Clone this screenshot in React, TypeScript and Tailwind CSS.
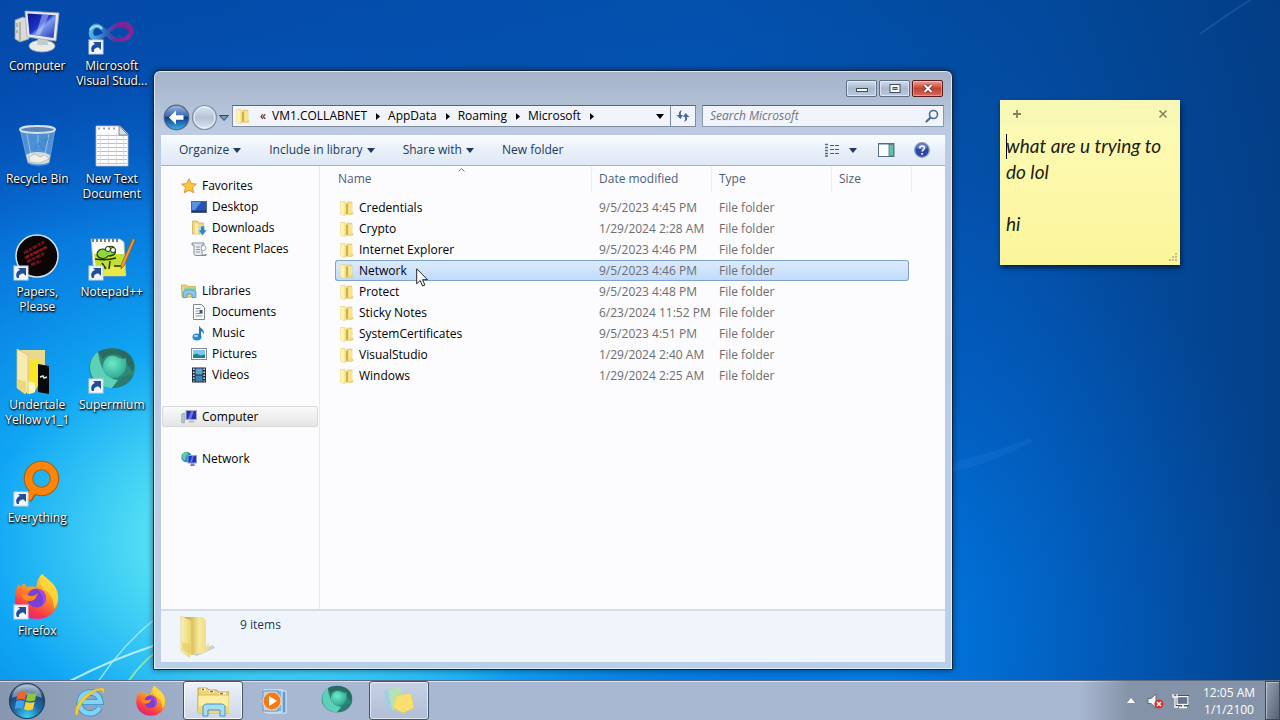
import React, { useState } from 'react';
import { clsx } from 'clsx';

interface IconProps {
  className?: string;
}

interface FileRow {
  name: string;
  modified: string;
}

const files: FileRow[] = [
  { name: 'Credentials', modified: '9/5/2023 4:45 PM' },
  { name: 'Crypto', modified: '1/29/2024 2:28 AM' },
  { name: 'Internet Explorer', modified: '9/5/2023 4:46 PM' },
  { name: 'Network', modified: '9/5/2023 4:46 PM' },
  { name: 'Protect', modified: '9/5/2023 4:48 PM' },
  { name: 'Sticky Notes', modified: '6/23/2024 11:52 PM' },
  { name: 'SystemCertificates', modified: '9/5/2023 4:51 PM' },
  { name: 'VisualStudio', modified: '1/29/2024 2:40 AM' },
  { name: 'Windows', modified: '1/29/2024 2:25 AM' },
];

/* ---------- shared drawings ---------- */

function ShortcutArrow() {
  return (
    <g>
      <rect x="1" y="32" width="14" height="14" fill="#f4f8fc" stroke="#c8d4e2" strokeWidth="1" />
      <path d="M4 44c-2-4 0-7 3-8L5 34h8v8l-2.500-2.500c-3 0-5 1.500-4.500 4.500z" fill="#1f4f9c" />
    </g>
  );
}

function FolderSmall({ className }: IconProps) {
  return (
    <svg viewBox="0 0 16 16" className={clsx('size-4 shrink-0', className)} aria-hidden="true">
      <path d="M8 2h5v9.500l1.300 2-1.300 1H8z" fill="#f0d976" stroke="#dcc25c" strokeWidth=".5" />
      <path d="M1.500 1.500H6l1 1.500v12l-2 .5-3.500-1.500z" fill="#f9e893" stroke="#e2c862" strokeWidth=".5" />
      <path d="M1.500 1.500L5 3v12l-3.500-1z" fill="#fdf3b4" />
      <path d="M7 4l2-.5v9.700L7 14.500z" fill="#c9a53a" opacity=".8" />
      <path d="M9.500 3l3.500.5v8l-3.500 2z" fill="#f8e68c" />
    </svg>
  );
}

function FolderLarge({ className }: IconProps) {
  return (
    <svg viewBox="0 0 40 46" className={className} aria-hidden="true">
      <defs>
        <linearGradient id="flFront" x1="0" x2="1">
          <stop offset="0" stopColor="#fbf2b4" />
          <stop offset="1" stopColor="#ecd672" />
        </linearGradient>
        <linearGradient id="flBack" x1="0" x2="1">
          <stop offset="0" stopColor="#c2a43c" />
          <stop offset=".35" stopColor="#dcc25c" />
          <stop offset=".65" stopColor="#f6e99e" />
          <stop offset="1" stopColor="#efdc84" />
        </linearGradient>
      </defs>
      <path d="M12 41l22-9 2 3-18 8z" fill="#9a9fb0" opacity=".45" />
      <path d="M5 4h19l3 4v27l1 4-16 3z" fill="url(#flBack)" />
      <path d="M27 33l3-3v5l-2 4z" fill="#f1e09a" />
      <path d="M2 3l10 5v33l-2 3-8-6z" fill="url(#flFront)" stroke="#e8d684" strokeWidth=".8" />
      <path d="M3 29l8 2v10l-8-4z" fill="#dfc04e" opacity=".45" />
    </svg>
  );
}

function CaretDown({ className }: IconProps) {
  return (
    <svg viewBox="0 0 8 5" className={clsx('h-[5px] w-2 shrink-0', className)} aria-hidden="true">
      <path d="M0 0h8L4 5z" fill="currentColor" />
    </svg>
  );
}

/* ---------- desktop icons ---------- */

function ComputerIcon() {
  return (
    <>
      <defs>
        <linearGradient id="pcScreen" x1="0" y1="0" x2="1" y2="1">
          <stop offset="0" stopColor="#0b1590" />
          <stop offset=".45" stopColor="#1b34c8" />
          <stop offset=".55" stopColor="#7f9cf0" />
          <stop offset="1" stopColor="#1b2fb8" />
        </linearGradient>
      </defs>
      <path d="M2 12l8-3 6 2v20l-9 3-5-3z" fill="#d9dcd6" stroke="#8d969c" strokeWidth=".8" />
      <path d="M7 14v19M4 15v4M4 22v3" stroke="#8f9a9d" strokeWidth="1.200" />
      <ellipse cx="29" cy="38" rx="13" ry="6" fill="#e9ebe6" stroke="#9aa5ae" strokeWidth=".8" />
      <path d="M25 28h9l1 9H24z" fill="#c4cbd0" />
      <path d="M12 3l34 2-3 28-29-4z" fill="#e6e9e8" stroke="#9fa9b4" strokeWidth=".8" />
      <path d="M14.500 5.500l28.500 1.700-2.500 22.800-24-3.500z" fill="url(#pcScreen)" />
      <path d="M29 6.500l7 .5-9 20-4-.5z" fill="#d2dcff" opacity=".45" />
    </>
  );
}

function VisualStudioIcon() {
  return (
    <>
      <defs>
        <linearGradient id="vsLoop" x1="0" x2="1">
          <stop offset="0" stopColor="#4fb4e6" />
          <stop offset=".4" stopColor="#2f5fb8" />
          <stop offset=".65" stopColor="#6a2c98" />
          <stop offset="1" stopColor="#8c2a98" />
        </linearGradient>
      </defs>
      <path
        d="M3 25c0-6 5-9 9-6 6 3 9 13 18 13 8 0 14-4 13-10s-8-7-14-5c-7 3-11 10-17 12-5 2-9 1-9-4z"
        fill="none"
        stroke="url(#vsLoop)"
        strokeWidth="4.500"
      />
      <path d="M24 21c5-6 16-8 21-1 2 4 0 8-3 10 2-9-9-13-18-9z" fill="#8a1f90" opacity=".8" />
      <path d="M2 22c3-5 9-5 12-1" stroke="#a4e0f6" strokeWidth="2" fill="none" />
      <ShortcutArrow />
    </>
  );
}

function RecycleBinIcon() {
  return (
    <>
      <path d="M7 8h35l-6 34c-5 3-16 3-21 0z" fill="#8cc0ea" opacity=".55" stroke="#b8dcf2" strokeWidth="1" />
      <path d="M13 34c5-4 18-4 24 0l-1 7c-5 3-16 3-21 0z" fill="#d8dcd4" />
      <path d="M16 36l6-3 5 3 5-2 4 4-9 4-10-1z" fill="#f0f0ea" stroke="#9b9d94" strokeWidth=".5" />
      <path d="M14 13l5 27M25 14v12M36 13l-5 25" stroke="#e0f2fc" strokeWidth="1" opacity=".5" />
      <path d="M21 29l5-7 5 7M28 20l6-2-3 6" stroke="#3b87ce" strokeWidth="2" fill="none" opacity=".8" />
      <ellipse cx="24.500" cy="8.500" rx="17.500" ry="3.500" fill="#5e86b4" stroke="#d4e2ea" strokeWidth="1.800" />
    </>
  );
}

function TextFileIcon() {
  return (
    <>
      <path d="M8 5h24l8 8v32H8z" fill="#fdfdfd" stroke="#b9bec6" strokeWidth=".8" />
      <path
        d="M9 14.500h30M9 18.500h30M9 22.500h30M9 26.500h30M9 30.500h30M9 34.500h30M9 38.500h30M9 42.500h30"
        stroke="#b4bac2"
        strokeWidth=".9"
      />
      <path d="M12.500 12v32M20.500 12v32M28.500 12v32M35.500 13v31" stroke="#d2d6da" strokeWidth=".7" />
      <path d="M10 7.500h2M15 7.500h2M20 7.500h2M25 7.500h2" stroke="#9aa2ab" strokeWidth="2" />
      <path d="M31 5v9h9z" fill="#dadfe4" stroke="#6d747b" strokeWidth=".8" />
    </>
  );
}

function PapersIcon() {
  return (
    <>
      <circle cx="24" cy="22" r="21" fill="#0b0506" stroke="#d7e4ea" strokeWidth="1.500" />
      <path d="M11 19L31 8M12 24l22-11M14 28l18-9M18 31l10-4" stroke="#6c141a" strokeWidth="3" strokeDasharray="5 1 3 1" />
      <path d="M13 23l20-10" stroke="#a82428" strokeWidth="1" strokeDasharray="3 1" />
      <ShortcutArrow />
    </>
  );
}

function NotepadIcon() {
  return (
    <>
      <path d="M3 5h29l4 3 2 34H6z" fill="#fbfbf6" stroke="#a6aca8" strokeWidth=".8" />
      <path d="M6 20h30l1 22-28-1z" fill="#bfe030" />
      <path d="M15 38c5-8 16-5 21-10l1 14H16z" fill="#e9ea46" />
      <path d="M5 5v3M9 5v3M13 5v3M17 5v3M21 5v3M25 5v3M29 5v3" stroke="#505a5e" strokeWidth="1.500" />
      <path d="M9 21c0-6 6-7 9-5 2-5 8-5 9 0 2 5-4 6-7 6-3 4-9 3-11-1z" fill="#8cd83c" stroke="#20300c" strokeWidth="1.200" />
      <circle cx="20" cy="15" r="2.500" fill="#fff" stroke="#20300c" />
      <circle cx="25" cy="16" r="2.500" fill="#fff" stroke="#20300c" />
      <path d="M7 25c7 1 14 1 21-1M14 29l4 6M22 27l-1 8M26 32h9" stroke="#20300c" strokeWidth="1.500" fill="none" />
      <path d="M45 4l2 2-11 26-3 3v-4z" fill="#f09a28" stroke="#8c5418" strokeWidth=".7" />
      <ShortcutArrow />
    </>
  );
}

function UndertaleIcon() {
  return (
    <>
      <path d="M5 3h27v35l-18 3z" fill="#ead98c" />
      <path d="M17 13h9v24l-5 9-7 1z" fill="#f8e428" />
      <path d="M14 34l8 2v9l-6 2z" fill="#fff" opacity=".7" />
      <path d="M25 17l11 2v28l-11-2z" fill="#08090a" />
      <path d="M27 30l3-1 1 2 3-1" stroke="#e8e8e8" strokeWidth="1.500" fill="none" />
      <path d="M4 2l11 6v36l-3 3-8-6z" fill="#f8ebb0" stroke="#d8c06c" strokeWidth=".8" />
      <path d="M5 32l8 3v11l-8-5z" fill="#e4c860" opacity=".6" />
    </>
  );
}

function EverythingIcon() {
  return (
    <>
      <path d="M20 32l-5 8" stroke="#9a5a10" strokeWidth="8" />
      <circle cx="28.500" cy="18.500" r="13" fill="none" stroke="#a85c08" strokeWidth="9.500" />
      <circle cx="28.500" cy="18.500" r="13" fill="none" stroke="#ff8408" strokeWidth="7.500" />
      <path d="M20 31l-5 8" stroke="#ff8408" strokeWidth="6" />
      <ShortcutArrow />
    </>
  );
}

function SupermiumGlyph({ id }: { id: string }) {
  return (
    <>
      <defs>
        <radialGradient id={id} cx=".4" cy=".35" r=".7">
          <stop offset="0" stopColor="#6fe8c6" />
          <stop offset="1" stopColor="#2ba892" />
        </radialGradient>
      </defs>
      <ellipse cx="24" cy="21" rx="23" ry="20" fill="#2a8a7a" />
      <path d="M10 5C20-1 40 0 45 13c2 5 1 8 0 12L33 9c-7-3-14-2-18 3z" fill="#2a6a60" />
      <path d="M10 5C2 10 0 21 4 29c3 7 11 12 20 12l6-8C18 32 12 20 10 5z" fill="#5fd0b8" />
      <path d="M24 41c11 0 20-6 22-15L34 30z" fill="#2b7c6e" />
      <path d="M15 18c2-8 8-11 14-8 3 2 7 2 9 1 2 12-4 20-12 20-7 0-12-6-11-13z" fill={`url(#${id})`} />
    </>
  );
}

function FirefoxGlyph({ id }: { id: string }) {
  return (
    <>
      <defs>
        <linearGradient id={id} x1=".8" y1="0" x2=".3" y2="1">
          <stop offset="0" stopColor="#ffe84a" />
          <stop offset=".45" stopColor="#ff9422" />
          <stop offset=".8" stopColor="#f8374a" />
          <stop offset="1" stopColor="#e0218a" />
        </linearGradient>
      </defs>
      <path
        d="M29 1c3 4 12 8 15 17 5 15-5 28-20 28C10 46 1 36 2 24c0-5 1-9 4-13l1 3 4-4 3 4c4-1 7-1 9 1 1-6 2-10 6-14z"
        fill={`url(#${id})`}
      />
      <path d="M29 1c3 4 12 8 15 17 2 7 1 13-3 18 0-9-3-15-9-19-5-4-6-9-3-16z" fill="#ffd93b" opacity=".85" />
      <circle cx="23.500" cy="25" r="9.500" fill="#7a3fd6" />
      <path d="M14 22c5 2 8 1 11-2-2 5-3 8-9 8-4 0-7-3-8-7z" fill="#ff8a1c" />
      <path d="M23 16c6 0 10 4 10 9 0 3-1 5-3 7 1-7-1-12-7-16z" fill="#a04ae8" />
    </>
  );
}

interface DesktopItem {
  label: string[];
  icon: React.ReactNode;
}

const desktopItems: DesktopItem[] = [
  { label: ['Computer'], icon: <ComputerIcon /> },
  { label: ['Microsoft', 'Visual Stud...'], icon: <VisualStudioIcon /> },
  { label: ['Recycle Bin'], icon: <RecycleBinIcon /> },
  { label: ['New Text', 'Document'], icon: <TextFileIcon /> },
  { label: ['Papers,', 'Please'], icon: <PapersIcon /> },
  { label: ['Notepad++'], icon: <NotepadIcon /> },
  { label: ['Undertale', 'Yellow v1_1'], icon: <UndertaleIcon /> },
  { label: ['Supermium'], icon: <><SupermiumGlyph id="smDesk" /><ShortcutArrow /></> },
  { label: ['Everything'], icon: <EverythingIcon /> },
  { label: ['Firefox'], icon: <><FirefoxGlyph id="ffDesk" /><ShortcutArrow /></> },
];

function DesktopIcon({ item, className }: { item: DesktopItem; className?: string }) {
  return (
    <button type="button" className={clsx('flex flex-col items-center self-start pt-2', className)}>
      <svg viewBox="0 0 48 48" className="size-12" aria-hidden="true">
        {item.icon}
      </svg>
      <span className="mt-[2px] flex flex-col whitespace-nowrap text-[12px] leading-[15px] text-white [text-shadow:1px_1px_2px_#000,0_1px_2px_#000]">
        {item.label.map((line) => (
          <span key={line}>{line}</span>
        ))}
      </span>
    </button>
  );
}

function Wallpaper() {
  return (
    <svg
      viewBox="0 0 1280 680"
      preserveAspectRatio="none"
      className="absolute inset-0 h-full w-full"
      aria-hidden="true"
    >
      <defs>
        <linearGradient id="wpBase" x1="0" y1="0" x2="1" y2="0">
          <stop offset="0" stopColor="#0450b8" />
          <stop offset=".55" stopColor="#0459bd" />
          <stop offset=".8" stopColor="#0350a8" />
          <stop offset="1" stopColor="#034088" />
        </linearGradient>
        <radialGradient id="wpGlow" gradientUnits="userSpaceOnUse" cx="0" cy="0" r="1" gradientTransform="translate(280 540) scale(700 500)">
          <stop offset="0" stopColor="#6aecf6" />
          <stop offset=".2" stopColor="#4fdcf4" />
          <stop offset=".42" stopColor="#10a6f4" />
          <stop offset=".68" stopColor="#0880e4" stopOpacity=".85" />
          <stop offset="1" stopColor="#0560cc" stopOpacity="0" />
        </radialGradient>
        <radialGradient id="wpRight" gradientUnits="userSpaceOnUse" cx="0" cy="0" r="1" gradientTransform="translate(880 640) scale(420 480)">
          <stop offset="0" stopColor="#0086f0" stopOpacity=".85" />
          <stop offset="1" stopColor="#0060d0" stopOpacity="0" />
        </radialGradient>
        <linearGradient id="wpTop" x1="0" y1="0" x2="0" y2="1">
          <stop offset="0" stopColor="#02367c" stopOpacity=".25" />
          <stop offset="1" stopColor="#02367c" stopOpacity="0" />
        </linearGradient>
      </defs>
      <rect width="1280" height="680" fill="url(#wpBase)" />
      <rect width="1280" height="680" fill="url(#wpGlow)" />
      <rect width="1280" height="680" fill="url(#wpRight)" />
      <rect width="1280" height="240" fill="url(#wpTop)" />
      <path d="M68 682Q110 660 156 645" stroke="#c9f6ff" strokeWidth="2" fill="none" opacity=".85" />
      <path d="M98 682Q122 645 156 618" stroke="#b4f2fb" strokeWidth="1.500" fill="none" opacity=".8" />
      <path d="M128 682Q140 664 156 652" stroke="#a8f08c" strokeWidth="2" fill="none" opacity=".8" />
      <path d="M952 462Q990 454 1030 438L1032 442Q990 464 952 472z" fill="#3fa0f0" opacity=".12" />
      <path d="M1200 34Q1225 16 1250 0" stroke="#3f7fc0" strokeWidth="2" fill="none" opacity=".3" />
    </svg>
  );
}

/* ---------- explorer window ---------- */

function CaptionButtons() {
  const base =
    'flex h-[17px] w-[31px] items-center justify-center rounded-[2px] border border-[#5f6f88] bg-linear-to-b from-[#d3deec] via-[#a9b9cf] to-[#b9c9df] shadow-[inset_0_0_0_1px_rgba(255,255,255,0.55)]';
  return (
    <div className="flex gap-[2px]">
      <button type="button" aria-label="Minimize" className={base}>
        <svg viewBox="0 0 12 9" className="h-[9px] w-3" aria-hidden="true">
          <rect x=".5" y="4.500" width="11" height="3" fill="#fff" stroke="#414b5c" />
        </svg>
      </button>
      <button type="button" aria-label="Maximize" className={base}>
        <svg viewBox="0 0 12 9" className="h-[9px] w-3" aria-hidden="true">
          <rect x="1" y=".5" width="10" height="8" fill="#fff" stroke="#414b5c" />
          <rect x="4" y="3.500" width="4" height="2" fill="#a9b9cf" stroke="#414b5c" />
        </svg>
      </button>
      <button
        type="button"
        aria-label="Close"
        className="flex h-[17px] w-[31px] items-center justify-center rounded-[2px] border border-[#5a1a20] bg-linear-to-b from-[#e7a397] via-[#c4402f] to-[#d8695a] shadow-[inset_0_0_0_1px_rgba(255,255,255,0.35)]"
      >
        <svg viewBox="0 0 12 9" className="h-[9px] w-3" aria-hidden="true">
          <path d="M2.500 1l7 7M9.500 1l-7 7" stroke="#5b2020" strokeWidth="3.600" />
          <path d="M2.500 1l7 7M9.500 1l-7 7" stroke="#fff" strokeWidth="2.200" />
        </svg>
      </button>
    </div>
  );
}

function NavButtons() {
  return (
    <div className="flex items-center">
      <button type="button" aria-label="Back" className="size-[27px]">
        <svg viewBox="0 0 27 27" aria-hidden="true">
          <defs>
            <linearGradient id="navBack" x1="0" y1="0" x2="0" y2="1">
              <stop offset="0" stopColor="#9fb9e2" />
              <stop offset=".45" stopColor="#3a66b4" />
              <stop offset=".5" stopColor="#0f3a8c" />
              <stop offset="1" stopColor="#38b4ee" />
            </linearGradient>
          </defs>
          <circle cx="13.500" cy="13.500" r="12.300" fill="url(#navBack)" stroke="#53647f" strokeWidth="1.200" />
          <path d="M13 6.500l-7 7 7 7v-4.800h7.500v-4.400H13z" fill="#fff" />
        </svg>
      </button>
      <button type="button" aria-label="Forward" className="ml-px size-[27px]">
        <svg viewBox="0 0 27 27" aria-hidden="true">
          <defs>
            <linearGradient id="navFwd" x1="0" y1="0" x2="0" y2="1">
              <stop offset="0" stopColor="#dfe8f2" />
              <stop offset=".5" stopColor="#b4c3d6" />
              <stop offset="1" stopColor="#dbe6f2" />
            </linearGradient>
          </defs>
          <circle cx="13.500" cy="13.500" r="12" fill="url(#navFwd)" stroke="#7f8fa6" strokeWidth="1.200" />
          <circle cx="13.500" cy="13.500" r="10.500" fill="none" stroke="#eef4fa" strokeWidth="1" />
        </svg>
      </button>
      <button type="button" aria-label="Recent pages" className="ml-px">
        <svg viewBox="0 0 10 6" className="h-[6px] w-[10px]" aria-hidden="true">
          <path d="M.5.500h9L5 5.500z" fill="#6f9ab8" stroke="#2c4768" strokeWidth="1" />
        </svg>
      </button>
    </div>
  );
}

function AddressBar() {
  const crumbs = ['VM1.COLLABNET', 'AppData', 'Roaming', 'Microsoft'];
  return (
    <nav
      aria-label="Address"
      className="flex h-[22px] min-w-0 flex-1 items-center border border-[#7d8ca3] border-t-[#55647c] bg-[#f1f5fb] text-[12px] leading-4 text-black"
    >
      <FolderSmall className="ml-[2px]" />
      <span className="ml-[6px] w-3 text-center">«</span>
      {crumbs.map((crumb, i) => (
        <React.Fragment key={crumb}>
          <button type="button" className={clsx('whitespace-nowrap', i === 0 && 'ml-[3px]')}>
            {crumb}
          </button>
          <svg viewBox="0 0 21 7" className="h-[7px] w-[21px] shrink-0" aria-hidden="true">
            <path d="M9 0l4 3.500-4 3.500z" fill="#000" />
          </svg>
        </React.Fragment>
      ))}
      <button type="button" aria-label="Previous locations" className="ml-auto flex h-full w-5 items-center justify-center">
        <CaretDown />
      </button>
      <button
        type="button"
        aria-label="Refresh"
        className="flex h-full w-[25px] items-center justify-center border-l border-[#7d8ca3]"
      >
        <svg viewBox="0 0 16 14" className="h-[14px] w-4" aria-hidden="true">
          <path d="M7 1C4 2 3.500 4 4 6H1.500l4 4L8 6H6c-.3-2 0-3.500 1-5z" fill="#4a6a94" />
          <path d="M9 13c3-1 3.500-3 3-5h2.500l-4-4L8 8h2c.3 2 0 3.500-1 5z" fill="#4a6a94" />
        </svg>
      </button>
    </nav>
  );
}

function Toolbar() {
  const menus = ['Organize', 'Include in library', 'Share with'];
  return (
    <div className="flex h-[31px] items-center border-b border-[#a3b2c7] bg-linear-to-b from-[#fbfdff] via-[#e9f0f9] via-50% to-[#dfe8f4] pr-[15px] pl-[18px] text-[12px] leading-4 text-[#1e395b]">
      {menus.map((menu) => (
        <button key={menu} type="button" className="mr-[28px] flex items-center gap-1 whitespace-nowrap">
          {menu}
          <CaretDown />
        </button>
      ))}
      <button type="button" className="whitespace-nowrap">
        New folder
      </button>
      <div className="ml-auto flex items-center">
        <button type="button" aria-label="Change your view">
          <svg viewBox="0 0 16 14" className="h-[14px] w-4" aria-hidden="true">
            <path d="M1 1.500h3M1 4.500h3M1 7.500h3M1 10.500h3M1 13h3" stroke="#5b6c80" strokeWidth="1.500" />
            <path d="M6 2.500h4M11 2.500h4M6 6.500h4M11 6.500h4M6 10.500h4M11 10.500h4" stroke="#4b5c70" strokeWidth="1.200" />
          </svg>
        </button>
        <button type="button" aria-label="More views" className="ml-[9px]">
          <CaretDown />
        </button>
        <button type="button" aria-label="Show the preview pane" className="ml-[21px]">
          <svg viewBox="0 0 17 14" className="h-[14px] w-[17px]" aria-hidden="true">
            <rect x=".5" y=".5" width="15.500" height="13" fill="#fff" stroke="#5a6c80" />
            <path d="M1 1.500h15" stroke="#a9b9c9" />
            <rect x="11" y="1.500" width="4.500" height="11.500" fill="#5cc4ac" stroke="#5a6c80" strokeWidth=".8" />
          </svg>
        </button>
        <button type="button" aria-label="Get help" className="ml-[19px]">
          <svg viewBox="0 0 16 16" className="size-4" aria-hidden="true">
            <circle cx="8" cy="8" r="7.300" fill="#2b48a8" stroke="#8b98b8" strokeWidth="1.300" />
            <path d="M2.500 6a5.600 5.600 0 0 1 11 0c-3 1.500-8 1.500-11 0z" fill="#8fa6e4" opacity=".6" />
            <path d="M5.800 6.300c0-3.200 4.600-3 4.600-.3 0 1.800-2.300 1.800-2.300 3.600M8.100 11v1.800" stroke="#fff" strokeWidth="1.600" fill="none" />
          </svg>
        </button>
      </div>
    </div>
  );
}

const navIcons: Record<string, React.ReactNode> = {
  Favorites: (
    <path
      d="M8 .8l2.200 4.800 5.200.5-3.900 3.500 1.200 5.200L8 12.200l-4.700 2.600 1.200-5.200L.6 6.100l5.200-.5z"
      fill="#fbc53c"
      stroke="#dd8f22"
      strokeWidth=".9"
    />
  ),
  Desktop: (
    <>
      <rect x=".5" y="2.500" width="15" height="11" fill="#2353b4" stroke="#55677e" />
      <path d="M1 3h9l-6 8H1z" fill="#5a92e0" />
      <path d="M1 12.500h14" stroke="#27344c" strokeWidth="1.500" />
    </>
  ),
  Downloads: (
    <>
      <path d="M1.500 1h5l1 2h5v11h-11z" fill="#f2d976" stroke="#caa84a" strokeWidth=".7" />
      <path d="M4 4l3-1v11l-3 1z" fill="#fbeeb0" />
      <path d="M9.500 6h4v4H16l-4.500 5.500L7 10h2.500z" fill="#2f86d0" stroke="#d6ecfa" strokeWidth=".6" />
    </>
  ),
  'Recent Places': (
    <>
      <path d="M1 2h12v2h-2v9c0 1.500 4 1.500 4 0v1.500H5c-1.500 0-2-1-2-2V4H1z" fill="#e7edf2" stroke="#75838f" strokeWidth=".9" />
      <path d="M5 6h4M5 8.500h4M5 11h4" stroke="#7f8d9c" strokeWidth=".9" />
      <circle cx="12.500" cy="7" r="2.500" fill="#fff" stroke="#8492a0" strokeWidth=".8" />
    </>
  ),
  Libraries: (
    <>
      <path d="M.5 2h5l1 1.500h8V14H1z" fill="#f0d878" stroke="#c6a64a" strokeWidth=".8" />
      <path d="M3 4.500h11v4H3z" fill="#8fd49c" />
      <path d="M2 9c3-3 10-3 13 0v5.500h-4V11H6v3.500H2z" fill="#8cc8ea" stroke="#4d94bc" strokeWidth=".8" />
    </>
  ),
  Documents: (
    <>
      <path d="M2.500.5h8l3 3v12h-11z" fill="#fff" stroke="#7d8894" />
      <path d="M4.500 4.500h5M4.500 7h3M4.500 9.500h7M4.500 12h7" stroke="#8792a0" />
      <rect x="8.500" y="6" width="3" height="3" fill="#3a556f" />
    </>
  ),
  Music: (
    <>
      <ellipse cx="6" cy="12" rx="4.500" ry="3.400" fill="#2487d2" />
      <path d="M8 12V.5c1 3 6 4 5 9-.5-2-2-3-3-3.300V12z" fill="#1f78c4" />
      <ellipse cx="5" cy="11" rx="2" ry="1.200" fill="#a6dcfa" />
    </>
  ),
  Pictures: (
    <>
      <rect x=".5" y="2.500" width="15" height="11" fill="#fff" stroke="#7f8d9c" />
      <rect x="2" y="4" width="12" height="8" fill="#7cc8ee" />
      <path d="M2 12V9l4-1.500 3 2 5-1V12z" fill="#1c7f8c" />
    </>
  ),
  Videos: (
    <>
      <rect x="1" y=".5" width="14" height="15" fill="#1e2b38" />
      <rect x="4.500" y="1.500" width="7" height="6" fill="#5aa4d4" />
      <rect x="4.500" y="8.500" width="7" height="6" fill="#3d84b4" />
      <path d="M2.800 1.500v13M13.200 1.500v13" stroke="#e4eaf0" strokeWidth="1.500" strokeDasharray="1.500 1.500" />
    </>
  ),
  Computer: (
    <>
      <path d="M.8 5l2.500-.8V14l-2.500-.5z" fill="#c5cbd0" stroke="#858f9a" strokeWidth=".7" />
      <rect x="5" y="1.500" width="10.500" height="9" fill="#232fb4" stroke="#a5afc0" />
      <path d="M10 2h3l-3 8H7z" fill="#8094f0" opacity=".7" />
      <path d="M7 13.500h7l-1.500-2h-4z" fill="#b6bec8" />
    </>
  ),
  Network: (
    <>
      <circle cx="5.500" cy="6" r="5.200" fill="#2a90c8" />
      <path d="M2 2.500c2-2 4-1.500 5 0L5 5l-1 4.500C1 8 1 5 2 2.500z" fill="#6cd08c" />
      <rect x="7" y="4.500" width="8.500" height="7.500" fill="#1d34c0" stroke="#93a2c8" />
      <path d="M11 5h2l-2 6H9z" fill="#7c90f0" opacity=".7" />
      <path d="M9 15h5l-1-2.500h-3z" fill="#6a80d0" />
    </>
  ),
};

const navGroups = [
  { title: 'Favorites', children: ['Desktop', 'Downloads', 'Recent Places'] },
  { title: 'Libraries', children: ['Documents', 'Music', 'Pictures', 'Videos'] },
  { title: 'Computer', children: [] },
  { title: 'Network', children: [] },
];

function NavItem({ name, nested, active }: { name: string; nested?: boolean; active?: boolean }) {
  return (
    <a
      href="#"
      className={clsx(
        'mr-px flex h-[21px] items-center gap-[5px] rounded-[2px] border text-[12px] leading-4 text-black',
        nested ? 'pl-[28px]' : 'pl-[18px]',
        active ? 'border-[#d9d9d9] bg-linear-to-b from-[#fafafa] to-[#e5e5e5]' : 'border-transparent',
      )}
    >
      <svg viewBox="0 0 16 16" className="size-4 shrink-0" aria-hidden="true">
        {navIcons[name]}
      </svg>
      {name}
    </a>
  );
}

function FileTable() {
  const [selected, setSelected] = useState('Network');
  const head = 'flex h-[26px] items-center border-r border-[#eceff4] pl-[7px]';
  return (
    <table className="ml-[15px] w-[574px] table-fixed border-separate border-spacing-0 text-left text-[12px] leading-4">
      <colgroup>
        <col className="w-[257px]" />
        <col className="w-[120px]" />
        <col className="w-[120px]" />
        <col />
      </colgroup>
      <thead className="text-[#4c607a]">
        <tr>
          <th className="relative p-0 pb-[5px] font-normal">
            <div className="flex h-[26px] items-center border-r border-[#eceff4] pl-[3px]">Name</div>
            <svg viewBox="0 0 7 4" className="absolute top-[2px] left-[123px] h-1 w-[7px]" aria-hidden="true">
              <path d="M.5 3.500l3-3 3 3" stroke="#6b7f96" fill="none" />
            </svg>
          </th>
          <th className="p-0 pb-[5px] font-normal">
            <div className={head}>Date modified</div>
          </th>
          <th className="p-0 pb-[5px] font-normal">
            <div className={head}>Type</div>
          </th>
          <th className="p-0 pb-[5px] font-normal">
            <div className={clsx(head, 'w-20')}>Size</div>
          </th>
        </tr>
      </thead>
      <tbody className="text-[#6d6d6d]">
        {files.map((file) => {
          const cell = clsx(
            'h-[21px] border-y p-0 pl-[7px] whitespace-nowrap',
            selected === file.name
              ? 'border-[#7da2ce] bg-linear-to-b from-[#dcebfc] to-[#c1dbfc]'
              : 'border-transparent',
          );
          return (
            <tr key={file.name} onClick={() => setSelected(file.name)}>
              <td className={clsx(cell, 'rounded-l-[3px] border-l pl-[3px]!')}>
                <div className="flex items-center gap-1 text-black">
                  <FolderSmall />
                  {file.name}
                </div>
              </td>
              <td className={cell}>{file.modified}</td>
              <td className={cell}>File folder</td>
              <td className={clsx(cell, 'rounded-r-[3px] border-r')} />
            </tr>
          );
        })}
      </tbody>
    </table>
  );
}

function ExplorerWindow() {
  return (
    <section
      aria-label="Microsoft"
      className="absolute top-[70px] left-[153px] flex h-[600px] w-[800px] flex-col rounded-t-[7px] border border-[#16243a] bg-linear-to-b from-[#a5b2c8] via-[#bccbe2] via-10% to-[#b9cfe8] px-[7px] pb-[7px] shadow-[inset_0_0_0_1px_rgba(235,245,255,0.8),0_0_6px_rgba(0,0,0,0.5)]"
    >
      <header className="flex h-[33px] items-start justify-end pt-[9px] pr-[2px]">
        <CaptionButtons />
      </header>
      <div className="flex h-[31px] items-start gap-[6px] pr-px pl-[2px]">
        <div className="flex flex-1 items-start gap-[3px]">
          <NavButtons />
          <div className="flex flex-1 pt-px">
            <AddressBar />
          </div>
        </div>
        <label className="mt-px flex h-[22px] w-[242px] items-center border border-[#8a99b0] border-t-[#55647c] bg-[#f1f5fb] pr-1 pl-[7px]">
          <input
            type="text"
            aria-label="Search Microsoft"
            placeholder="Search Microsoft"
            className="min-w-0 flex-1 bg-transparent text-[12px] leading-4 italic outline-none placeholder:text-[#6d7480] placeholder:opacity-100"
          />
          <svg viewBox="0 0 14 14" className="size-[14px]" aria-hidden="true">
            <circle cx="8.500" cy="5.500" r="4" fill="#eef5fc" stroke="#4a6a94" strokeWidth="1.600" />
            <path d="M5.500 8.500L1.500 12.500" stroke="#4a6a94" strokeWidth="2.200" strokeLinecap="round" />
          </svg>
        </label>
      </div>
      <div className="flex min-h-0 flex-1 flex-col bg-[#fcfcfe]">
        <Toolbar />
        <div className="flex min-h-0 flex-1">
          <aside className="flex w-[159px] flex-col gap-[21px] border-r border-[#e6ebf3] pt-[9px] pl-px">
            {navGroups.map((group) => (
              <div key={group.title}>
                <NavItem name={group.title} active={group.title === 'Computer'} />
                {group.children.map((child) => (
                  <NavItem key={child} name={child} nested />
                ))}
              </div>
            ))}
          </aside>
          <main className="min-w-0 flex-1">
            <FileTable />
          </main>
        </div>
        <footer className="flex h-[53px] items-start border-t-2 border-[#d5dde8] bg-[#f0f4fb] pl-[18px]">
          <FolderLarge className="mt-[2px] h-[46px] w-10" />
          <p className="mt-[6px] ml-[21px] text-[12px] leading-4 text-[#1e395b]">9 items</p>
        </footer>
      </div>
    </section>
  );
}

function StickyNote() {
  return (
    <section
      aria-label="Sticky note"
      className="absolute top-[100px] left-[1000px] flex h-[165px] w-[180px] flex-col bg-linear-to-b from-[#fdfbb8] to-[#fbf59a] shadow-[1px_3px_5px_rgba(0,0,0,0.6)]"
    >
      <header className="flex h-[27px] items-center justify-between bg-[#f8f7b4] px-3">
        <button type="button" aria-label="New note">
          <svg viewBox="0 0 10 10" className="size-[10px]" aria-hidden="true">
            <path d="M5 1v8M1 5h8" stroke="#85825a" strokeWidth="1.800" />
          </svg>
        </button>
        <button type="button" aria-label="Delete note">
          <svg viewBox="0 0 10 10" className="size-[10px]" aria-hidden="true">
            <path d="M1.500 1.500l7 7M8.500 1.500l-7 7" stroke="#85825a" strokeWidth="1.600" />
          </svg>
        </button>
      </header>
      <textarea
        aria-label="Note text"
        defaultValue={'what are u trying to\ndo lol\n\nhi'}
        className="w-full flex-1 resize-none overflow-hidden bg-transparent pt-[6px] pl-[6px] font-['Lato','Open_Sans',sans-serif] text-[19px] leading-[26px] text-[#1c1c10] italic outline-none"
      />
      <span className="absolute top-[34px] left-[6px] h-[25px] w-px bg-black" />
      <svg viewBox="0 0 10 10" className="absolute right-[2px] bottom-[2px] size-[10px]" aria-hidden="true">
        <path d="M7 1h2M7 4h2M4 4h2M7 7h2M4 7h2M1 7h2" stroke="#b5b078" strokeWidth="1.500" />
      </svg>
    </section>
  );
}

/* ---------- taskbar ---------- */

function StartOrb() {
  return (
    <button type="button" aria-label="Start" className="ml-2 size-[38px]">
      <svg viewBox="0 0 38 38" aria-hidden="true">
        <defs>
          <radialGradient id="orb" cx=".5" cy=".95" r=".9">
            <stop offset="0" stopColor="#3fd0f4" />
            <stop offset=".45" stopColor="#1c6ca8" />
            <stop offset=".8" stopColor="#1f4470" />
            <stop offset="1" stopColor="#88a4bc" />
          </radialGradient>
        </defs>
        <circle cx="19" cy="19" r="17.500" fill="url(#orb)" stroke="#24405c" strokeWidth="1.200" />
        <path d="M4 16C6 6 12 3 19 3s13 3 15 13c-8-4-22-4-30 0z" fill="#dbe9f4" opacity=".45" />
        <path d="M10 11c3-2 6-2 8.500-.5L16.800 18c-2.500-1.500-5.500-1.500-8.500 0z" fill="#f0642c" />
        <path d="M19.700 11c3 1.500 6 1.500 9-.3L27 18.200c-3 1.500-6 1.500-9 .2z" fill="#8fc63c" />
        <path d="M8 19.300c3-1.500 6-1.500 8.500 0L14.800 27c-2.500-1.500-5.500-1.500-8 0z" fill="#3fa2e8" />
        <path d="M17.700 19.700c3 1.500 6 1.500 9 0L25 27.300c-3 1.500-6 1.500-9 0z" fill="#fccf34" />
      </svg>
    </button>
  );
}

interface TaskItem {
  label: string;
  state?: 'active' | 'open';
  icon: React.ReactNode;
}

const tasks: TaskItem[] = [
  {
    label: 'Internet Explorer',
    icon: (
      <>
        <path d="M26.500 22.500A10.500 10.500 0 1 1 27.500 17H10" fill="none" stroke="#2c8ccc" strokeWidth="6" />
        <path d="M26.500 22.500A10.500 10.500 0 1 1 27.500 17H10" fill="none" stroke="#7fd4f6" strokeWidth="4.500" />
        <path d="M3 30C-1 24 12 4 29 3c3 0 3 3 1 6 0-3-1-4-3-4C15 8 4 22 5 30z" fill="#f5cf38" stroke="#d8a41c" strokeWidth=".5" />
      </>
    ),
  },
  {
    label: 'Firefox',
    icon: (
      <g transform="scale(.667)">
        <FirefoxGlyph id="ffTask" />
      </g>
    ),
  },
  {
    label: 'Windows Explorer',
    state: 'active',
    icon: (
      <>
        <path d="M1 3h9l2 2h8l1 2h11v21H1z" fill="#ecd777" stroke="#b5973c" strokeWidth=".8" />
        <path d="M4 4.500h5M12 6.500h5M22 8.500h7" stroke="#fff" strokeWidth="2" />
        <path d="M5 4.500h2M13 6.500h3M23 8.500h3" stroke="#d04a3c" strokeWidth="1.500" />
        <path d="M1 10h31v18H1z" fill="#fbeea4" stroke="#cfb458" strokeWidth=".8" />
        <path d="M1 21h31v7.500H1z" fill="#eed77a" />
        <path d="M6 31V22c0-2 2-3 4-3h14c2 0 4 1 4 3v9h-5v-6H11v6z" fill="#a5dcf6" stroke="#4b93bc" strokeWidth="1" />
      </>
    ),
  },
  {
    label: 'Windows Media Player',
    icon: (
      <>
        <path d="M8 6h19v22H8z" fill="#5f9cd0" stroke="#e0eef8" strokeWidth="1" />
        <path d="M5 5h18v22H5z" fill="#79b4e2" stroke="#f0f6fc" strokeWidth="1" />
        <path d="M4 6h15v20H4z" fill="#b9d6ee" stroke="#3f78b0" strokeWidth=".7" />
        <circle cx="13" cy="16" r="9" fill="#f07b1c" stroke="#f9d0a4" strokeWidth="1.200" />
        <path d="M10 11l8 5-8 5z" fill="#fff" />
      </>
    ),
  },
  {
    label: 'Supermium',
    icon: (
      <g transform="scale(.667)">
        <SupermiumGlyph id="smTask" />
      </g>
    ),
  },
  {
    label: 'Sticky Notes',
    state: 'open',
    icon: (
      <>
        <path d="M1 6l8-3 5 18-9 4z" fill="#9fd0ea" />
        <path d="M5 5l12-3 4 20-12 3z" fill="#b8e2b4" />
        <path d="M13 11l15-3 3 15-11 5-10-5z" fill="#f7e070" stroke="#e2cc58" strokeWidth=".6" />
      </>
    ),
  },
];

function Taskbar() {
  return (
    <footer className="relative flex h-10 items-center border-t border-[#5b6c84] bg-linear-to-r from-[#8797b0] via-[#a9b8d2] via-20% to-[#a9b8d2] shadow-[inset_0_1px_0_rgba(235,243,255,0.7)]">
      <StartOrb />
      <div className="ml-[13px] flex h-full gap-[2px]">
        {tasks.map((task) => (
          <button
            key={task.label}
            type="button"
            aria-label={task.label}
            className={clsx(
              'flex h-full w-[60px] items-center justify-center rounded-[3px] border',
              !task.state && 'border-transparent',
              task.state === 'active' && 'border-[#44546c] bg-linear-to-b from-[#eef2f9] to-[#ccd6e8] shadow-[inset_0_0_0_1px_rgba(255,255,255,0.8)]',
              task.state === 'open' && 'border-[#44546c] bg-linear-to-b from-[#c6d1e4] to-[#b0bed6] shadow-[inset_0_0_0_1px_rgba(255,255,255,0.6)]',
            )}
          >
            <svg viewBox="0 0 32 32" className="size-8" aria-hidden="true">
              {task.icon}
            </svg>
          </button>
        ))}
      </div>
      <div className="ml-auto flex h-full items-center bg-linear-to-r from-transparent to-[#8593a8] to-25% pl-12">
        <button type="button" aria-label="Show hidden icons">
          <svg viewBox="0 0 8 5" className="h-[5px] w-2" aria-hidden="true">
            <path d="M0 5l4-5 4 5z" fill="#fff" />
          </svg>
        </button>
        <button type="button" aria-label="Volume muted" className="ml-3">
          <svg viewBox="0 0 17 16" className="h-4 w-[17px]" aria-hidden="true">
            <path d="M1 5.500h3L9 1v14l-5-4.500H1z" fill="#f2f5f8" stroke="#4c5868" strokeWidth=".8" />
            <circle cx="12" cy="11" r="4.600" fill="#d8332c" />
            <path d="M10 9l4 4M14 9l-4 4" stroke="#fff" strokeWidth="1.500" />
          </svg>
        </button>
        <button type="button" aria-label="Network" className="ml-2">
          <svg viewBox="0 0 17 16" className="h-4 w-[17px]" aria-hidden="true">
            <rect x="5" y="3.500" width="11" height="8" fill="#5d6b7c" stroke="#2b3644" strokeWidth="3" />
            <rect x="5" y="3.500" width="11" height="8" fill="#66758a" stroke="#fff" strokeWidth="1.300" />
            <path d="M7 14.500h8M11 12v2.500" stroke="#fff" strokeWidth="1.500" />
            <path d="M1 1v3h4V1M3 4v10h3" stroke="#fff" strokeWidth="1.300" fill="none" />
          </svg>
        </button>
        <button type="button" className="mr-2 ml-3 flex w-[56px] flex-col items-center text-[12px] leading-[17px] whitespace-nowrap text-white">
          <span>12:05 AM</span>
          <span>1/1/2100</span>
        </button>
        <button
          type="button"
          aria-label="Show desktop"
          className="h-full w-[15px] border border-[#3e4a5c] bg-linear-to-br from-[#98a4b5] to-[#566274] shadow-[inset_1px_1px_0_rgba(255,255,255,0.4)]"
        />
      </div>
    </footer>
  );
}

export default function App() {
  return (
    <div className="flex min-h-screen flex-col overflow-hidden bg-[#0459bd] font-['Open_Sans','Noto_Sans',sans-serif]">
      <div className="relative flex-1">
        <Wallpaper />
        <div className="relative grid w-[149px] auto-rows-[113px] grid-cols-2">
          {desktopItems.map((item) => (
            <DesktopIcon key={item.label[0]} item={item} className={item.label[0] === 'Firefox' ? 'col-start-1' : undefined} />
          ))}
        </div>
        <ExplorerWindow />
        <StickyNote />
        <svg viewBox="0 0 12 19" className="absolute top-[268px] left-[416px] h-[19px] w-3" aria-hidden="true">
          <path d="M.7.800v15l3.500-3.300 2.400 5.500 2.300-1-2.400-5.300h5z" fill="#fff" stroke="#222" strokeWidth="1" />
        </svg>
      </div>
      <Taskbar />
    </div>
  );
}
